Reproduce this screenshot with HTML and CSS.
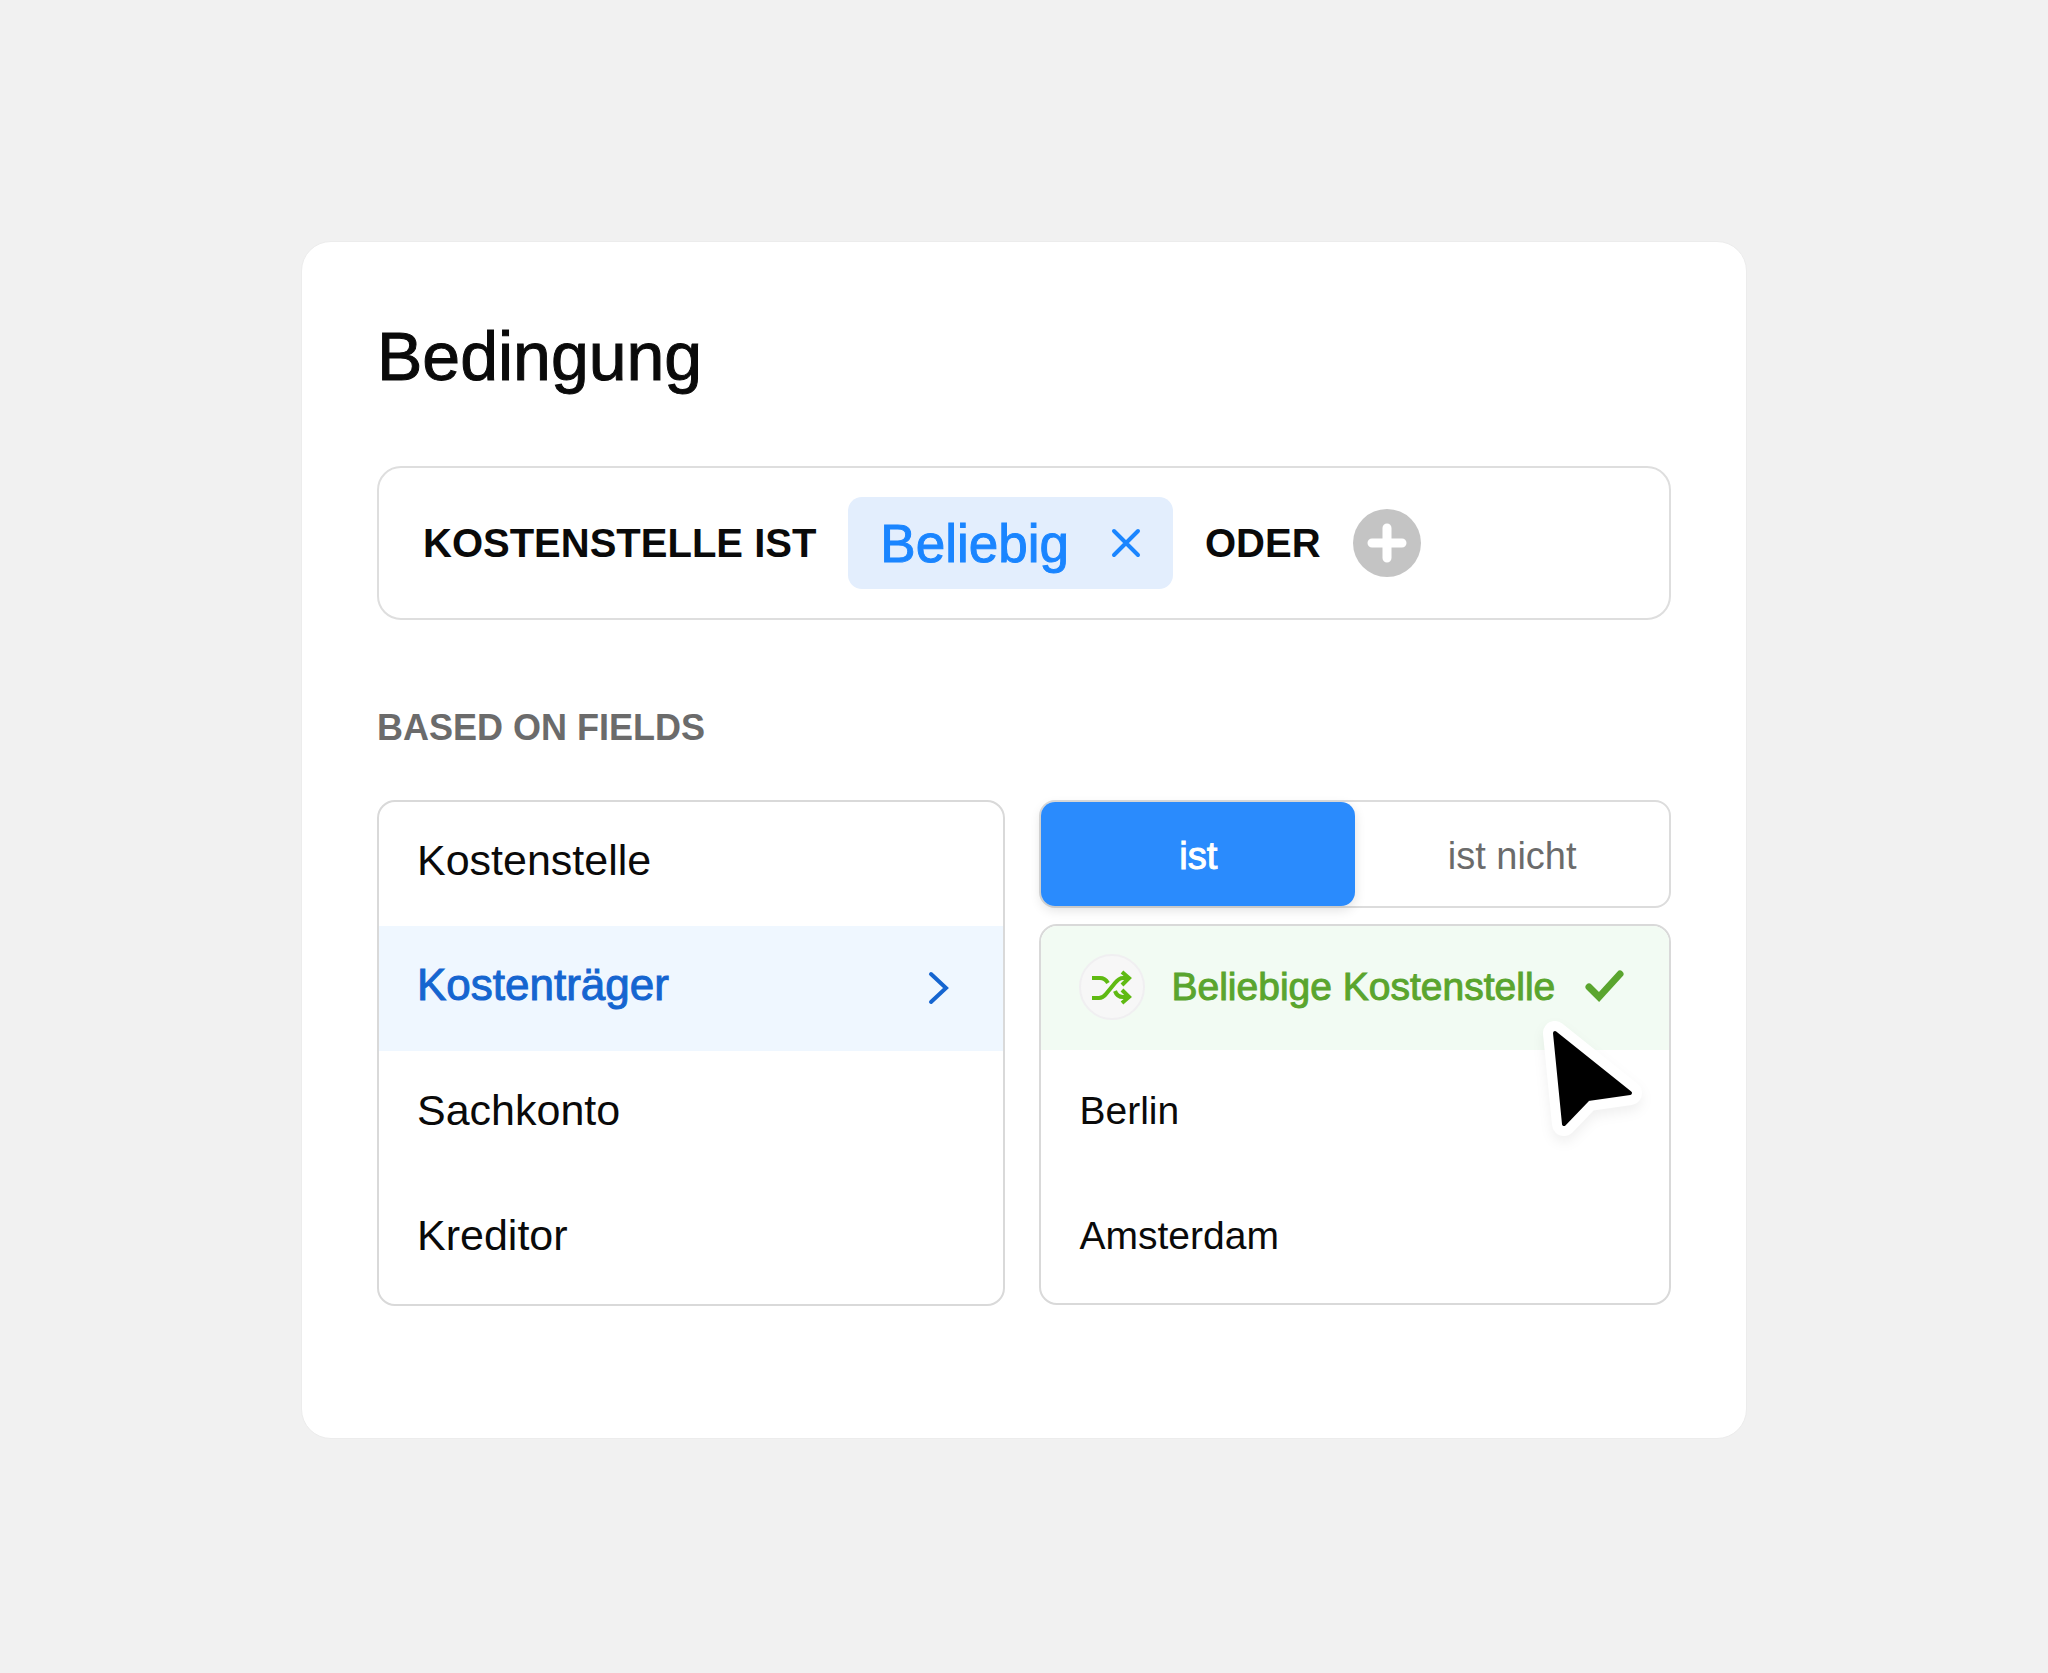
FILE: index.html
```html
<!DOCTYPE html>
<html lang="de">
  <head>
    <meta charset="UTF-8">
    <title>Bedingung</title>
    <link rel="stylesheet" href="styles.css">
  </head>
  <body>
    <main class="card">
      <h1>Bedingung</h1>

      <div class="condition">
        <span class="keyword">KOSTENSTELLE IST</span>
        <span class="chip">
          Beliebig
          <button class="remove" aria-label="Entfernen">
            <svg width="30" height="30" viewBox="0 0 30 30"><path d="M3 3L27 27M27 3L3 27"/></svg>
          </button>
        </span>
        <span class="keyword">ODER</span>
        <button class="add" aria-label="Hinzufügen">
          <svg width="68" height="68" viewBox="0 0 68 68"><path d="M34 19V49M19 34H49"/></svg>
        </button>
      </div>

      <h2>BASED ON FIELDS</h2>

      <div class="columns">
        <div class="list fields">
          <button class="row">Kostenstelle</button>
          <button class="row selected">
            Kostenträger
            <svg class="chevron" width="24" height="34" viewBox="0 0 24 34"><path d="M4 3L19 17L4 31"/></svg>
          </button>
          <button class="row">Sachkonto</button>
          <button class="row">Kreditor</button>
        </div>

        <div class="right">
          <div class="toggle">
            <button class="active" aria-pressed="true">ist</button>
            <button aria-pressed="false">ist nicht</button>
          </div>

          <div class="list options">
            <button class="row any">
              <span class="shuffle">
                <svg width="42" height="36" viewBox="0 0 42 36">
                  <path d="M1 9H9Q14 9 17 14"/>
                  <path d="M1 29H8Q12 29 15 25L24 14Q28 9 32 9H38"/>
                  <path d="M24 22Q26 28 32 28H38"/>
                  <path d="M31 3L38 9L31 16"/>
                  <path d="M31 21L38 28L31 34"/>
                </svg>
              </span>
              Beliebige Kostenstelle
              <svg class="check" width="40" height="34" viewBox="0 0 40 34"><path d="M4 17L14 27L35 4"/></svg>
            </button>
            <button class="row">Berlin</button>
            <button class="row">Amsterdam</button>

            <!-- mouse pointer over the list -->
            <svg class="pointer" width="130" height="150" viewBox="0 0 130 150">
              <path class="outline" d="M24 21L99 81L57 87L33 112Z"/>
              <path class="arrow" d="M24 21L99 81L57 87L33 112Z"/>
            </svg>
          </div>
        </div>
      </div>
    </main>
  </body>
</html>
```
FILE: styles.css
```css
* {
  box-sizing: border-box;
}

body {
  margin: 0;
  padding: 241px 301px;
  background-color: #f1f1f1;
  font-family: "Liberation Sans", Arial, sans-serif;
  color: #0a0a0a;
}

button {
  font-family: inherit;
  color: inherit;
  border: none;
  padding: 0;
  background: none;
  cursor: pointer;
}

svg {
  display: block;
  fill: none;
  stroke: currentColor;
  stroke-linecap: round;
}

.card {
  background-color: #fff;
  border: 1px solid #ececec;
  border-radius: 30px;
  padding: 74px 75px 132px;
}

h1 {
  margin: 0 0 70px;
  font-size: 68px;
  line-height: 80px;
  font-weight: normal;
  -webkit-text-stroke: 1px;
}

h2 {
  margin: 86px 0 50px;
  font-size: 36px;
  line-height: 44px;
  color: #6b6b6b;
}

/* Condition bar */
.condition {
  display: flex;
  align-items: center;
  border: 2px solid #dedede;
  border-radius: 24px;
  padding: 29px 44px;
}

.keyword {
  font-size: 40px;
  line-height: 44px;
  font-weight: bold;
}

.chip {
  display: flex;
  align-items: center;
  gap: 42px;
  height: 92px;
  margin: 0 32px;
  padding: 0 32px;
  border-radius: 14px;
  background-color: #e3eefd;
  color: #1a85ff;
  font-size: 53px;
  -webkit-text-stroke: 1px;
}

.remove svg {
  stroke-width: 4;
}

.add {
  margin-left: 32px;
  border-radius: 50%;
  background-color: #c4c4c4;
  color: #fff;
}

.add svg {
  stroke-width: 9;
}

/* Two columns below */
.columns {
  display: grid;
  grid-template-columns: 628fr 631fr;
  align-items: start;
  gap: 34px;
}

.list {
  position: relative;
  border: 2px solid #d9d9d9;
  border-radius: 18px;
  padding-bottom: 3px;
}

.row {
  display: flex;
  align-items: center;
  width: 100%;
  height: 125px;
  padding: 0 38px 3px;
  text-align: left;
}

.row:first-child {
  height: 124px;
  border-radius: 16px 16px 0 0;
}

.fields .row {
  padding-bottom: 7px;
  font-size: 43px;
}

.fields .selected {
  background-color: #eff7ff;
  color: #1565d0;
  font-size: 44px;
  -webkit-text-stroke: 1px;
}

.chevron {
  margin: 6px 14px 0 auto;
  stroke-width: 4;
}

.toggle {
  display: flex;
  height: 108px;
  margin-bottom: 16px;
  border: 2px solid #dcdcdc;
  border-radius: 16px;
}

.toggle button {
  flex: 1;
  border-radius: 14px;
  padding-top: 4px;
  font-size: 38px;
  color: #6b6b6b;
}

.toggle .active {
  background-color: #2a8bfd;
  color: #fff;
  -webkit-text-stroke: 1px;
  box-shadow: 0 4px 12px rgba(0, 0, 0, 0.12);
}

.options .row {
  font-size: 39px;
}

.options .any {
  background-color: #f2fbf3;
  color: #5aa52e;
  -webkit-text-stroke: 1px;
}

.shuffle {
  display: flex;
  align-items: center;
  justify-content: center;
  width: 66px;
  height: 66px;
  margin-right: 26px;
  border: 2px solid #f0eff1;
  border-radius: 50%;
  background-color: #f7f7f7;
  color: #5fba12;
}

.shuffle svg {
  stroke-width: 4;
  stroke-linecap: butt;
}

.check {
  margin-left: 30px;
  stroke-width: 7;
}

.pointer {
  position: absolute;
  top: 86px;
  right: 8px;
  stroke-linejoin: round;
  filter: drop-shadow(0 6px 6px rgba(0, 0, 0, 0.06));
}

.outline {
  stroke: #fff;
  stroke-width: 24px;
}

.arrow {
  fill: #000;
  stroke: #000;
  stroke-width: 4;
}
```
